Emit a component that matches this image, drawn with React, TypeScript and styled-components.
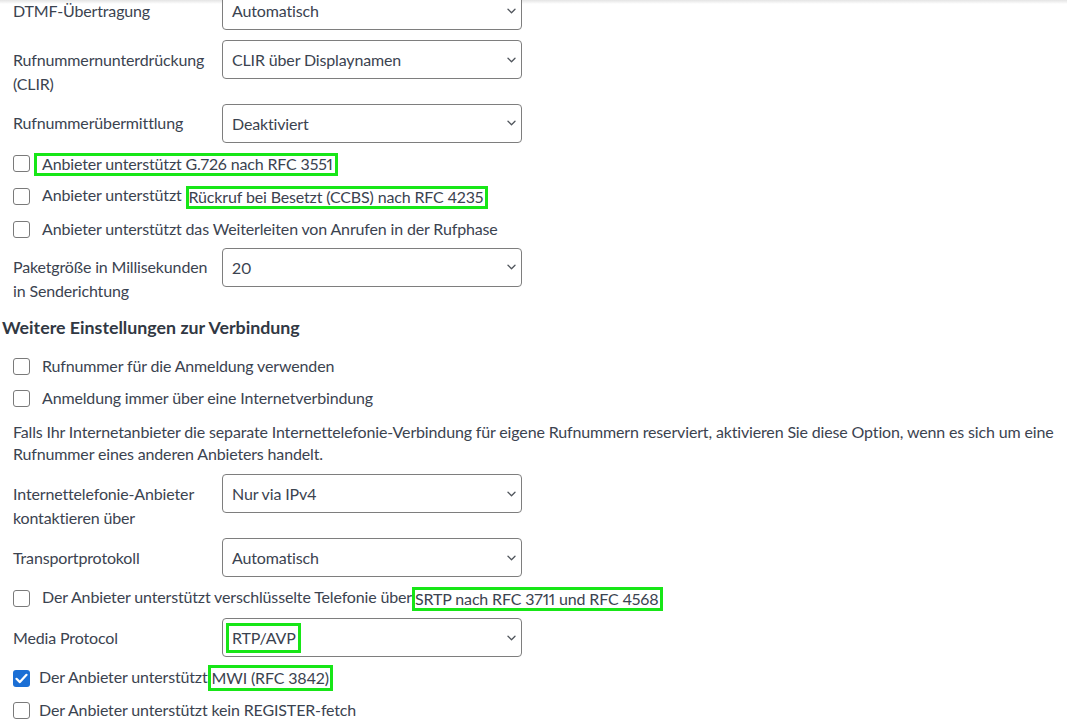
import React from "react";
import styled, { createGlobalStyle } from "styled-components";

const Global = createGlobalStyle`
  html, body { margin: 0; padding: 0; }
  body {
    background: linear-gradient(#e4e4e4 0, #ffffff 4px) no-repeat, #ffffff;
    font-family: Lato, "Liberation Sans", sans-serif;
    color: #3b4350;
    overflow: hidden;
  }
`;

const Page = styled.div`
  display: flex;
  flex-direction: column;
  margin-top: -9px;
  padding-left: 13px;
  width: 1054px;
  font-size: 16px;
  letter-spacing: -0.15px;
  font-feature-settings: "pnum" 1;
  font-variant-numeric: proportional-nums;
`;

const FieldRow = styled.div<{ $mt: number }>`
  display: flex;
  align-items: flex-start;
  margin-top: ${(p) => p.$mt}px;
`;

const FieldLabel = styled.div`
  width: 209px;
  flex: none;
  padding-top: 7.5px;
  line-height: 24px;
  white-space: nowrap;
`;

const SelectBox = styled.div`
  width: 300px;
  height: 39px;
  flex: none;
  box-sizing: border-box;
  border: 1px solid #7e7e7e;
  border-radius: 4px;
  background: #fff;
  display: flex;
  align-items: center;
  justify-content: space-between;
  padding: 0 5px 0 9px;
  color: #3b4350;
`;

const CheckRow = styled.div<{ $mt: number; $h: number }>`
  display: flex;
  align-items: center;
  height: ${(p) => p.$h}px;
  margin-top: ${(p) => p.$mt}px;
  line-height: 24px;
  white-space: nowrap;
`;

const Box = styled.span<{ $checked?: boolean; $gap: number }>`
  width: 17px;
  height: 17px;
  flex: none;
  box-sizing: border-box;
  border-radius: 3px;
  border: ${(p) => (p.$checked ? "none" : "1.5px solid #7a7a7a")};
  background: ${(p) => (p.$checked ? "#1b6fd5" : "#fff")};
  margin-right: ${(p) => p.$gap}px;
  display: flex;
  align-items: center;
  justify-content: center;
`;

const Mark = styled.span<{ $w: number; $h: number; $pl: number; $pr?: number; $ml?: number }>`
  display: inline-flex;
  align-items: center;
  box-sizing: border-box;
  min-width: ${(p) => p.$w}px;
  height: ${(p) => p.$h}px;
  padding-left: ${(p) => p.$pl}px;
  padding-right: ${(p) => p.$pr ?? 2}px;
  margin-left: ${(p) => p.$ml ?? 0}px;
  border: 3px solid #17e617;
  vertical-align: middle;
  white-space: nowrap;
`;

const Heading = styled.div`
  margin: 12px 0 0 -11px;
  font-size: 17.8px;
  font-weight: 700;
  line-height: 24px;
  letter-spacing: 0;
  color: #313843;
`;

const Paragraph = styled.p`
  margin: 7px 0 0 0;
  line-height: 22px;
  white-space: nowrap;
`;

const Chevron = () => (
  <svg width="9" height="6" viewBox="0 0 9 6" aria-hidden="true">
    <path d="M1 1.2l3.5 3.5 3.5-3.5" fill="none" stroke="#50555c" strokeWidth="1.3" strokeLinecap="round" strokeLinejoin="round" />
  </svg>
);

const Check = () => (
  <svg width="13" height="11" viewBox="0 0 13 11" aria-hidden="true">
    <path d="M1.5 5.8l3.4 3.3L11.5 1.8" fill="none" stroke="#fff" strokeWidth="2.2" strokeLinecap="round" strokeLinejoin="round" />
  </svg>
);

const Select = ({ children }: { children: React.ReactNode }) => (
  <SelectBox role="combobox">
    <span>{children}</span>
    <Chevron />
  </SelectBox>
);

const Field = ({ mt, label, children }: { mt: number; label: React.ReactNode; children: React.ReactNode }) => (
  <FieldRow $mt={mt}>
    <FieldLabel>{label}</FieldLabel>
    <Select>{children}</Select>
  </FieldRow>
);

const Checkbox = ({
  mt = 0,
  h = 32,
  gap = 12,
  checked,
  children,
}: {
  mt?: number;
  h?: number;
  gap?: number;
  checked?: boolean;
  children: React.ReactNode;
}) => (
  <CheckRow $mt={mt} $h={h}>
    <Box $checked={checked} $gap={gap}>{checked && <Check />}</Box>
    <span>{children}</span>
  </CheckRow>
);

export default function App() {
  return (
    <>
      <Global />
      <Page>
        <Field mt={0} label="DTMF-Übertragung">Automatisch</Field>
        <Field mt={10} label={<>Rufnummernunterdrückung<br />(CLIR)</>}>CLIR über Displaynamen</Field>
        <Field mt={8} label="Rufnummerübermittlung">Deaktiviert</Field>

        <Checkbox mt={4} h={33} gap={4}>
          <Mark $w={300} $h={23} $pl={5}>Anbieter unterstützt G.726 nach RFC 3551</Mark>
        </Checkbox>
        <Checkbox h={33}>
          Anbieter unterstützt <Mark $w={300} $h={23} $pl={0}>Rückruf bei Besetzt (CCBS) nach RFC 4235</Mark>
        </Checkbox>
        <Checkbox h={33}>Anbieter unterstützt das Weiterleiten von Anrufen in der Rufphase</Checkbox>

        <Field mt={2} label={<>Paketgröße in Millisekunden<br />in Senderichtung</>}>20</Field>

        <Heading>Weitere Einstellungen zur Verbindung</Heading>

        <Checkbox mt={11}>Rufnummer für die Anmeldung verwenden</Checkbox>
        <Checkbox>Anmeldung immer über eine Internetverbindung</Checkbox>

        <Paragraph>
          Falls Ihr Internetanbieter die separate Internettelefonie-Verbindung für eigene Rufnummern reserviert, aktivieren Sie diese Option, wenn es sich um eine
          <br />
          Rufnummer eines anderen Anbieters handelt.
        </Paragraph>

        <Field mt={9} label={<>Internettelefonie-Anbieter<br />kontaktieren über</>}>Nur via IPv4</Field>
        <Field mt={8.5} label="Transportprotokoll">Automatisch</Field>

        <Checkbox mt={5}>
          Der Anbieter unterstützt verschlüsselte Telefonie über<Mark $w={245} $h={24} $pl={0} $pr={1}>SRTP nach RFC 3711 und RFC 4568</Mark>
        </Checkbox>

        <FieldRow $mt={4}>
          <FieldLabel>Media Protocol</FieldLabel>
          <SelectBox role="combobox">
            <Mark $w={74} $h={30} $pl={3} $ml={-6}>RTP/AVP</Mark>
            <Chevron />
          </SelectBox>
        </FieldRow>

        <Checkbox mt={5} gap={9} checked>
          Der Anbieter unterstützt<Mark $w={113} $h={26} $pl={1} $pr={1}>MWI (RFC 3842)</Mark>
        </Checkbox>
        <Checkbox gap={9}>Der Anbieter unterstützt kein REGISTER-fetch</Checkbox>
      </Page>
    </>
  );
}
